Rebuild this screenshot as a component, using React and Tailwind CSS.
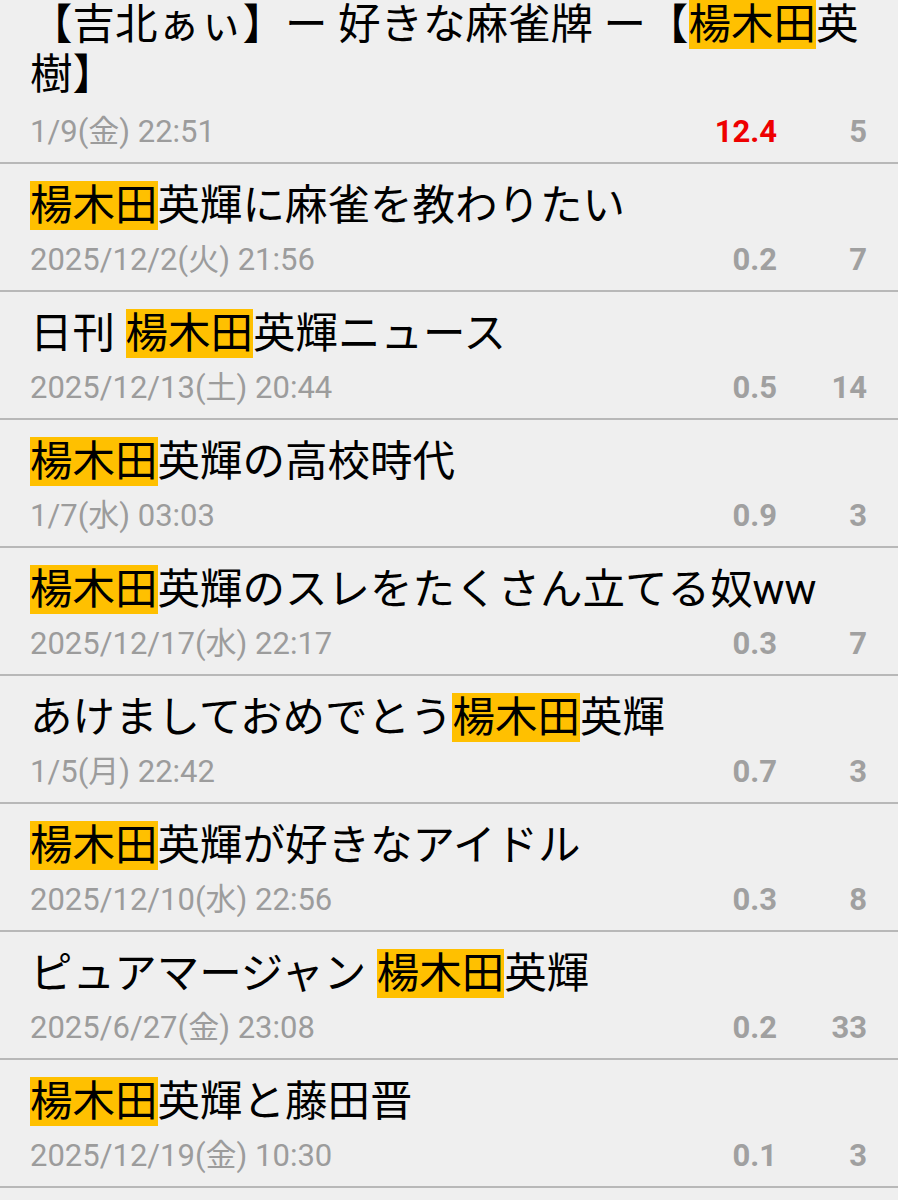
const HL = '楊木田'

const THREADS = [
  { pre: '【吉北ぁぃ】ー 好きな麻雀牌 ー【', post: '英樹】', date: '1/9(金) 22:51', score: '12.4', hot: true, count: '5' },
  { pre: '', post: '英輝に麻雀を教わりたい', date: '2025/12/2(火) 21:56', score: '0.2', count: '7' },
  { pre: '日刊 ', post: '英輝ニュース', date: '2025/12/13(土) 20:44', score: '0.5', count: '14' },
  { pre: '', post: '英輝の高校時代', date: '1/7(水) 03:03', score: '0.9', count: '3' },
  { pre: '', post: '英輝のスレをたくさん立てる奴ww', date: '2025/12/17(水) 22:17', score: '0.3', count: '7' },
  { pre: 'あけましておめでとう', post: '英輝', date: '1/5(月) 22:42', score: '0.7', count: '3' },
  { pre: '', post: '英輝が好きなアイドル', date: '2025/12/10(水) 22:56', score: '0.3', count: '8' },
  { pre: 'ピュアマージャン ', post: '英輝', date: '2025/6/27(金) 23:08', score: '0.2', count: '33' },
  { pre: '', post: '英輝と藤田晋', date: '2025/12/19(金) 10:30', score: '0.1', count: '3' },
  { pre: '', post: '英輝について語ろう', date: '2025/12/20(土) 12:00', score: '0.1', count: '2' },
]

function Row({ t, first }) {
  return (
    <li className={`border-b-2 border-[#b8b8b8] pl-[30px] pr-[31px] pb-[11px] ${first ? 'pt-0' : 'pt-[17px]'}`}>
      <p className="text-[42.5px] leading-[50px] text-black">
        {t.pre}
        <span className="bg-[#ffc000]">{HL}</span>
        {t.post}
      </p>
      <div className={`flex items-center text-[31px] leading-[38px] ${first ? 'mt-[13px]' : 'mt-[10px]'}`}>
        <span className="flex-1 text-[#9c9c9c]">{t.date}</span>
        <span className={`font-bold ${t.hot ? 'text-[#ee0000]' : 'text-[#a0a0a0]'}`}>{t.score}</span>
        <span className="w-[90px] text-right font-bold text-[#a0a0a0]">{t.count}</span>
      </div>
    </li>
  )
}

export default function App() {
  return (
    <div
      className="h-[1200px] w-[898px] overflow-hidden bg-[#efefef]"
      style={{ fontFamily: 'Roboto, "Noto Sans CJK JP", sans-serif' }}
    >
      <ul>
        {THREADS.map((t, i) => (
          <Row key={i} t={t} first={i === 0} />
        ))}
      </ul>
    </div>
  )
}
